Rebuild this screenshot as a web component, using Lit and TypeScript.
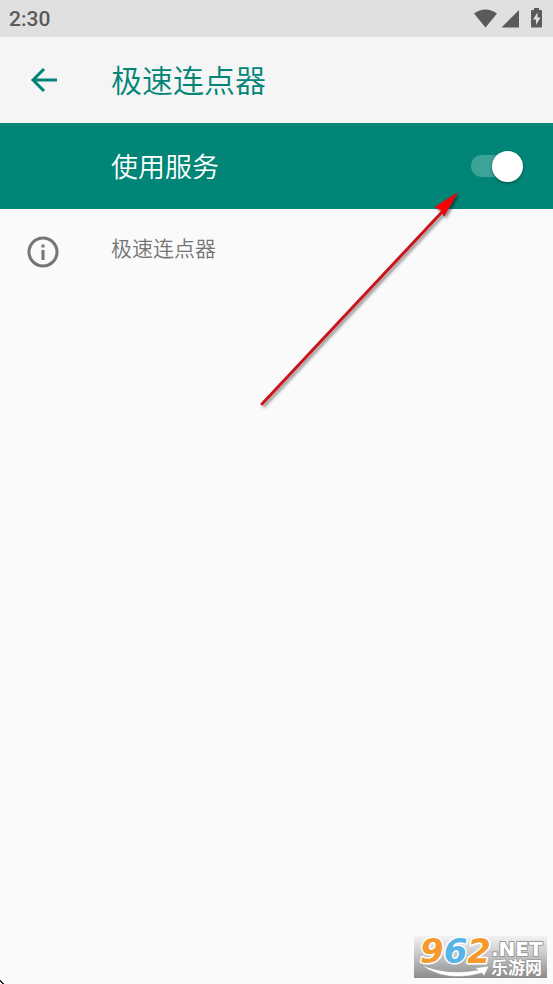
import { LitElement, html, css } from "lit";
import { customElement, state } from "lit/decorators.js";

@customElement("app-root")
export class AppRoot extends LitElement {
  @state() private enabled = true;

  static styles = css`
    :host {
      display: block;
      position: relative;
      min-height: 100vh;
      overflow: hidden;
      background: #fafafa;
      font-family: Roboto, "Noto Sans CJK SC", sans-serif;
      color: #757575;
    }
    svg {
      display: block;
    }
    .status {
      display: flex;
      align-items: center;
      justify-content: space-between;
      height: 37px;
      padding: 0 8px 0 9px;
      background: #e0e0e0;
      color: #5a5a5a;
      font-size: 21px;
      font-weight: 500;
    }
    .bar,
    .service {
      display: grid;
      grid-template-columns: 84px 1fr auto;
      align-items: center;
      height: 86px;
      padding: 0 30px 0 27px;
    }
    .bar {
      background: #f5f5f5;
      color: #008577;
    }
    .back {
      width: 32px;
      height: 32px;
      padding: 0;
      border: 0;
      background: none;
      color: inherit;
      cursor: pointer;
    }
    h1,
    .label {
      margin: 0;
      padding-top: 4px;
      line-height: 40px;
      font-weight: 350;
    }
    h1 {
      font-size: 31px;
    }
    .service {
      background: #008577;
      color: #fff;
    }
    .label {
      grid-column: 2;
      font-size: 27px;
    }
    .switch {
      appearance: none;
      display: flex;
      align-items: center;
      width: 52px;
      height: 32px;
      margin: 0;
      cursor: pointer;
    }
    .switch::before {
      content: "";
      width: 48px;
      height: 22px;
      border-radius: 11px;
      background: rgba(255, 255, 255, 0.24);
    }
    .switch::after {
      content: "";
      width: 31px;
      height: 31px;
      margin-left: -48px;
      flex: none;
      border-radius: 50%;
      background: #fafafa;
      box-shadow: 0 1px 3px rgba(0, 0, 0, 0.4);
    }
    .switch:checked::after {
      margin-left: -27px;
      background: #fff;
    }
    .info {
      display: grid;
      grid-template-columns: 84px 1fr;
      align-items: start;
      padding: 24px 30px 24px 27px;
    }
    .info svg {
      margin-top: 3px;
    }
    .info p {
      margin: 0;
      font-size: 21px;
      line-height: 32px;
      font-weight: 350;
    }
    .pointer {
      position: absolute;
      left: 252px;
      top: 183px;
      pointer-events: none;
    }
    .corner {
      position: absolute;
      left: 0;
      bottom: 0;
    }
    .mark {
      position: absolute;
      right: 6px;
      bottom: 6px;
    }
    .mark text {
      font-family: "DejaVu Sans", "Noto Sans CJK SC", sans-serif;
      font-weight: 700;
      paint-order: stroke;
      stroke-linejoin: round;
    }
    .digits {
      font-size: 34px;
      font-style: italic;
      stroke: #fff;
      stroke-width: 3px;
    }
    .orange {
      fill: #f49a2c;
    }
    .blue {
      fill: #58b4e4;
    }
    .net {
      font-size: 20px;
      fill: #fff;
      stroke: #9a9a9a;
      stroke-width: 2px;
    }
    .site {
      font-size: 17px;
      fill: #fff;
      stroke: #888;
      stroke-width: 1px;
    }
  `;

  render() {
    return html`
      <div class="status">
        <span>2:30</span>
        <svg width="72" height="22" viewBox="0 0 72 22" fill="#5a5a5a" aria-hidden="true">
          <path d="M1 5.500Q12.500-2.500 24 5.500L12.500 19.500Z" />
          <path d="M46 2V19.500H28.500Z" />
          <path
            fill-rule="evenodd"
            d="M61 0H66V2H68Q69 2 69 3V18.500Q69 19.500 68 19.500H59Q58 19.500 58 18.500V3Q58 2 59 2H61ZM64.500 4.500L60 11.500H63V17L67.500 9.500H64.500Z"
          />
        </svg>
      </div>
      <header class="bar">
        <button class="back" aria-label="返回">
          <svg width="32" height="32" viewBox="0 0 32 32" fill="none" stroke="currentColor" stroke-width="3">
            <path d="M30 16H6M17 5L6 16L17 27" />
          </svg>
        </button>
        <h1>极速连点器</h1>
      </header>
      <div class="service">
        <label class="label" for="service">使用服务</label>
        <input
          class="switch"
          id="service"
          type="checkbox"
          role="switch"
          .checked=${this.enabled}
          @change=${(e: Event) => (this.enabled = (e.target as HTMLInputElement).checked)}
        />
      </div>
      <section class="info">
        <svg width="32" height="32" viewBox="0 0 32 32" aria-hidden="true">
          <circle cx="16" cy="16" r="14" fill="none" stroke="#757575" stroke-width="3" />
          <path d="M14.500 8.500H17.500V11.500H14.500ZM14.500 14H17.500V24H14.500Z" fill="#757575" />
        </svg>
        <p>极速连点器</p>
      </section>

      <svg class="pointer" width="220" height="236" viewBox="0 0 220 236" aria-hidden="true">
        <defs>
          <filter id="shade" x="-10%" y="-10%" width="120%" height="120%">
            <feDropShadow dx="2" dy="2" stdDeviation="1.500" flood-color="#000" flood-opacity="0.45" />
          </filter>
        </defs>
        <g filter="url(#shade)">
          <path d="M10 221L190 29" stroke="#c8141c" stroke-width="3" stroke-linecap="round" />
          <path d="M205 10L183 24L189 27L192 33Z" fill="#fa0505" stroke="#c8141c" stroke-width="1" />
        </g>
      </svg>

      <svg class="corner" width="4" height="4" viewBox="0 0 4 4" aria-hidden="true">
        <path d="M0 0V2H1V3H2V4H4V3H3V2H2V1H1V0Z" fill="#222" />
      </svg>

      <svg class="mark" width="133" height="54" viewBox="0 -12 133 54">
        <defs>
          <linearGradient id="plate" x1="0" y1="0" x2="0" y2="1">
            <stop offset="0" stop-color="#f2f2f2" />
            <stop offset="0.500" stop-color="#c2c2c2" />
            <stop offset="1" stop-color="#8c8c8c" />
          </linearGradient>
        </defs>
        <rect width="133" height="42" fill="url(#plate)" />
        <path
          d="M7 29Q35 40 64 34L61 32L75 30L70 40L68 37Q32 47 7 29Z"
          fill="#fff"
          stroke="#999"
          stroke-width="0.500"
        />
        <text class="digits" x="6" y="27"><tspan class="orange">9</tspan><tspan class="blue">6</tspan><tspan class="orange">2</tspan></text>
        <text class="net" x="77" y="20">.NET</text>
        <text class="site" x="77" y="38">乐游网</text>
      </svg>
    `;
  }
}
